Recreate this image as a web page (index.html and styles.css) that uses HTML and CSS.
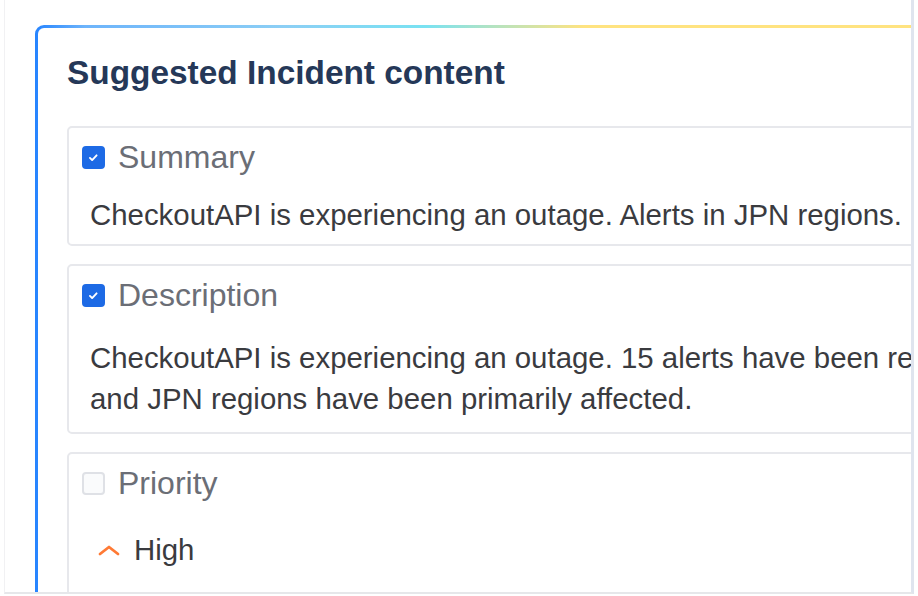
FILE: index.html
```html
<!DOCTYPE html>
<html lang="en">
<head>
<meta charset="utf-8">
<title>Suggested Incident content</title>
<link rel="stylesheet" href="styles.css">
</head>
<body>
<div class="frame">
  <section class="card">
    <h2 class="card-title">Suggested Incident content</h2>

    <div class="field">
      <label class="field-head">
        <span class="check is-checked"><svg viewBox="0 0 24 24" width="23" height="23"><path d="M7.5 12.5l2.8 2.8 5.6-6" fill="none" stroke="#fff" stroke-width="2.4" stroke-linecap="round" stroke-linejoin="round"/></svg></span>
        <span class="field-label">Summary</span>
      </label>
      <p class="field-body">CheckoutAPI is experiencing an outage. Alerts in JPN regions.</p>
    </div>

    <div class="field field-multi">
      <label class="field-head">
        <span class="check is-checked"><svg viewBox="0 0 24 24" width="23" height="23"><path d="M7.5 12.5l2.8 2.8 5.6-6" fill="none" stroke="#fff" stroke-width="2.4" stroke-linecap="round" stroke-linejoin="round"/></svg></span>
        <span class="field-label">Description</span>
      </label>
      <p class="field-body">CheckoutAPI is experiencing an outage. 15 alerts have been re<br>and JPN regions have been primarily affected.</p>
    </div>

    <div class="field field-last">
      <label class="field-head">
        <span class="check"></span>
        <span class="field-label">Priority</span>
      </label>
      <div class="priority">
        <svg class="priority-icon" viewBox="0 0 24 12" width="24" height="12"><path d="M3 10l9-7 9 7" fill="none" stroke="#ff7a35" stroke-width="2.8" stroke-linecap="round" stroke-linejoin="round"/></svg>
        <span class="priority-text">High</span>
      </div>
    </div>
  </section>
</div>
</body>
</html>
```

FILE: styles.css
```css
* { box-sizing: border-box; }

html, body {
  margin: 0;
  padding: 0;
  background: #fff;
}

body {
  font-family: "Liberation Sans", Arial, sans-serif;
  width: 918px;
  height: 596px;
  overflow: hidden;
}

.frame {
  margin-left: 4px;
  width: 910px;
  height: 594px;
  border-left: 1px solid #f1f1f3;
  border-right: 3px solid #dfe4ee;
  border-bottom: 2px solid #e6e7ea;
  overflow: hidden;
  padding-top: 25px;
  padding-left: 30px;
}

.card {
  width: 1000px;
  min-height: 700px;
  border-top: 3px solid transparent;
  border-left: 3px solid transparent;
  border-radius: 9px 0 0 0;
  background:
    linear-gradient(#fff, #fff) padding-box,
    linear-gradient(to right, #2684ff 0%, #6db4fb 5%, #8ccff5 25%, #79e2f2 39%, #b5e3c0 46%, #ffe380 55%, #ffe380 100%) border-box;
  padding: 25px 0 0 29px;
}

.card-title {
  margin: 0 0 33px;
  font-size: 33.4px;
  line-height: 40px;
  font-weight: 700;
  color: #253858;
}

.field {
  border: 2px solid #e7e8ec;
  border-radius: 5px;
  padding: 11px 20px 9px 0;
  margin-bottom: 18px;
}

.field-head {
  display: flex;
  align-items: center;
  height: 36px;
  padding-left: 13px;
  gap: 13px;
}

.check {
  width: 23px;
  height: 23px;
  border-radius: 4px;
  border: 2px solid #dfe1e6;
  background: #fafbfc;
  display: flex;
  align-items: center;
  justify-content: center;
  flex: none;
}

.check.is-checked {
  background: #1d6ae5;
  border-color: #1d6ae5;
}

.check svg { display: block; }

.field-label {
  font-size: 32px;
  line-height: 36px;
  color: #6b6e76;
}

.field-body {
  margin: 19px 0 0;
  padding-left: 21px;
  font-size: 29.4px;
  line-height: 41px;
  color: #3a3b3f;
  white-space: nowrap;
}

.field-multi .field-body { margin-top: 24px; }
.field-multi { padding-bottom: 13px; }

.field-last { padding-bottom: 60px; }

.priority {
  display: flex;
  align-items: center;
  gap: 13px;
  padding-left: 28px;
  margin-top: 28px;
  height: 41px;
}

.priority-icon { display: block; }

.priority-text {
  font-size: 29.4px;
  line-height: 41px;
  color: #3a3b3f;
}
```
